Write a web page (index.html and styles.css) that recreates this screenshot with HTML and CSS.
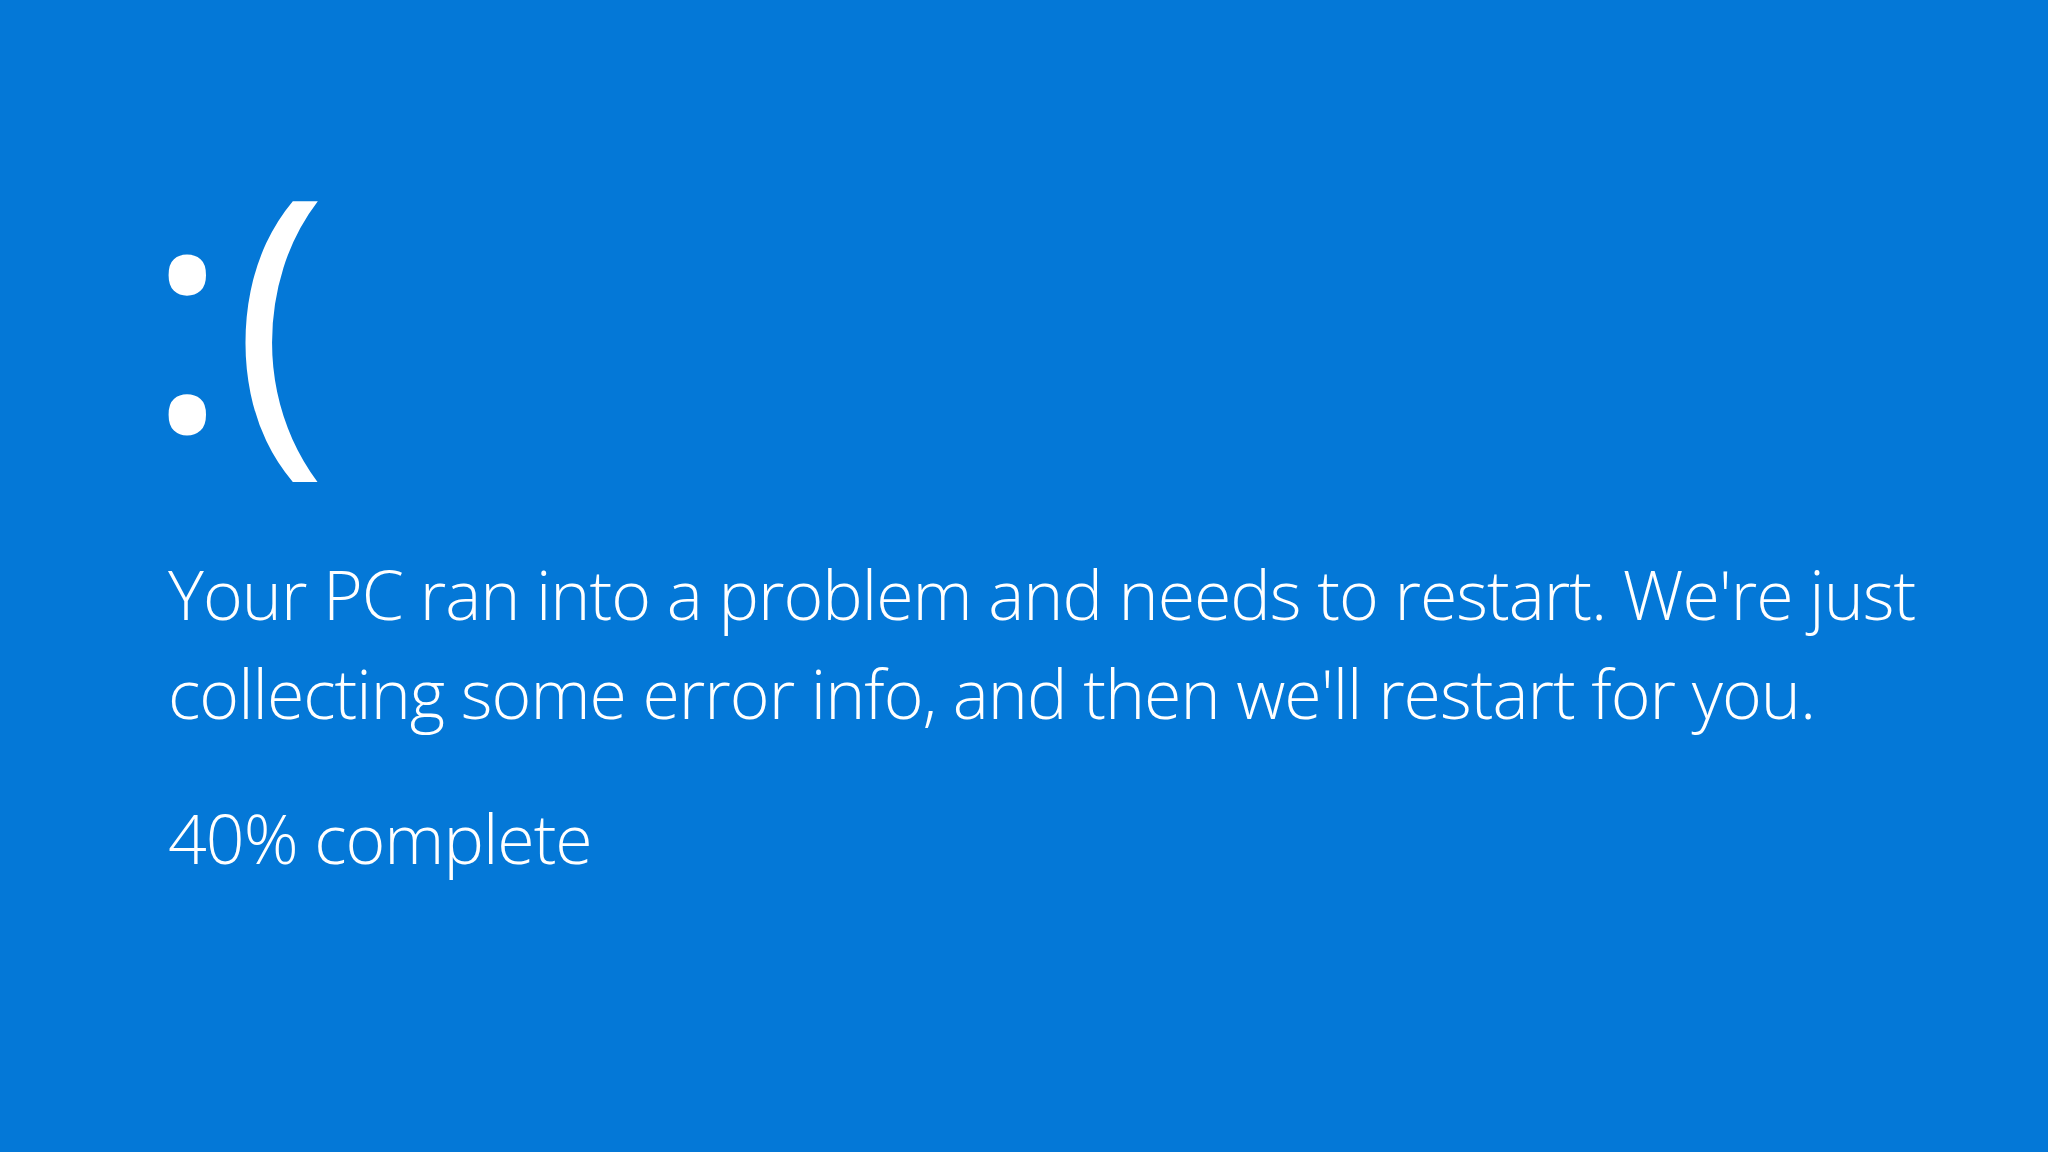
FILE: index.html
```html
<!DOCTYPE html>
<html lang="en">
<head>
<meta charset="utf-8">
<title>Your PC ran into a problem</title>
<link rel="stylesheet" href="styles.css">
</head>
<body>
<main class="screen">
  <div class="face"><span class="colon">:</span><span class="paren">(</span></div>
  <p class="message">Your PC ran into a problem and needs to restart. We're just<br>collecting some error info, and then we'll restart for you.</p>
  <p class="progress">40% complete</p>
</main>
</body>
</html>
```
FILE: styles.css
```css
html, body {
  margin: 0;
  padding: 0;
  background: #0478d7;
}
.screen {
  width: 2048px;
  height: 1152px;
  box-sizing: border-box;
  padding: 145px 0 0 168px;
  color: #ffffff;
  font-family: "Open Sans", "Noto Sans", sans-serif;
  font-weight: 350;
  overflow: hidden;
}
.face {
  font-size: 322px;
  font-weight: 400;
  line-height: 1;
  height: 345px;
  white-space: nowrap;
}
.colon {
  margin-left: -23px;
  font-weight: 500;
}
.paren {
  margin-left: 3px;
}
.message {
  margin: 54px 0 0 0;
  font-size: 68px;
  line-height: 99px;
  letter-spacing: -1px;
  white-space: nowrap;
}
.progress {
  margin: 46px 0 0 0;
  font-size: 68px;
  line-height: 99px;
  letter-spacing: -1px;
  white-space: nowrap;
}
```
